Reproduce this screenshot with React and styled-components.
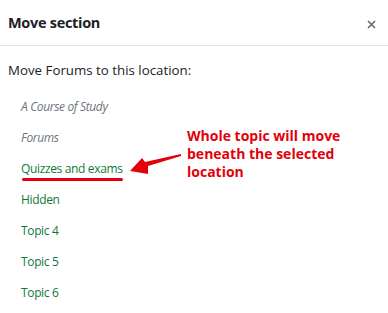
import styled, { createGlobalStyle } from "styled-components";

const GlobalStyle = createGlobalStyle`
  body {
    margin: 0;
    background: #fff;
    font-family: "Open Sans", "Noto Sans", sans-serif;
  }
`;

const Modal = styled.div`
  width: 388px;
  height: 313px;
  position: relative;
  overflow: hidden;
  background: #fff;
`;

const Header = styled.div`
  display: flex;
  align-items: center;
  justify-content: space-between;
  height: 46px;
  padding: 0 10px 0 8px;
  border-bottom: 1px solid #dee2e6;
  box-sizing: border-box;
`;

const Title = styled.h5`
  margin: 0;
  font-size: 14.5px;
  letter-spacing: -0.3px;
  font-weight: 700;
  color: #1d2125;
`;

const Close = styled.button`
  border: 0;
  background: none;
  padding: 0;
  width: 14px;
  height: 14px;
  display: flex;
  align-items: center;
  justify-content: center;
  margin-top: 3px;
`;

const Body = styled.div`
  padding: 14px 8px 0;
`;

const Intro = styled.p`
  margin: 0;
  font-size: 13.3px;
  line-height: 20px;
  color: #1d2125;
`;

const List = styled.ul`
  list-style: none;
  margin: 11px 0 0;
  padding: 0 0 0 13px;
`;

const Item = styled.li`
  height: 31px;
  line-height: 31px;
  font-size: 12px;
  letter-spacing: -0.35px;
  font-style: ${(p) => (p.$muted ? "italic" : "normal")};
  color: ${(p) => (p.$muted ? "#6a737b" : "#0f7a37")};
`;

const Underline = styled.div`
  position: absolute;
  left: 22px;
  top: 178px;
  width: 101px;
  height: 3px;
  border-radius: 2px;
  background: #e3000b;
`;

const Arrow = styled.svg`
  position: absolute;
  left: 120px;
  top: 140px;
`;

const Note = styled.div`
  position: absolute;
  left: 187px;
  top: 127px;
  font-size: 14px;
  font-weight: 700;
  line-height: 18px;
  color: #e3000b;
`;

const items = [
  { label: "A Course of Study", muted: true },
  { label: "Forums", muted: true },
  { label: "Quizzes and exams" },
  { label: "Hidden" },
  { label: "Topic 4" },
  { label: "Topic 5" },
  { label: "Topic 6" },
];

export default function App() {
  return (
    <Modal>
      <GlobalStyle />
      <Header>
        <Title>Move section</Title>
        <Close aria-label="Close">
          <svg width="9" height="9" viewBox="0 0 9 9">
            <path d="M1 1L8 8M8 1L1 8" stroke="#6a6a6a" strokeWidth="1.6" />
          </svg>
        </Close>
      </Header>
      <Body>
        <Intro>Move Forums to this location:</Intro>
        <List>
          {items.map((it) => (
            <Item key={it.label} $muted={it.muted}>
              {it.label}
            </Item>
          ))}
        </List>
      </Body>
      <Underline />
      <Arrow width="70" height="40" viewBox="0 0 70 40">
        <path d="M10 31 L22 18 L25 22 L61 14 L61 16 L28 26 L28 34 Z" fill="#e3000b" />
      </Arrow>
      <Note>
        Whole topic will move
        <br />
        beneath the selected
        <br />
        location
      </Note>
    </Modal>
  );
}
